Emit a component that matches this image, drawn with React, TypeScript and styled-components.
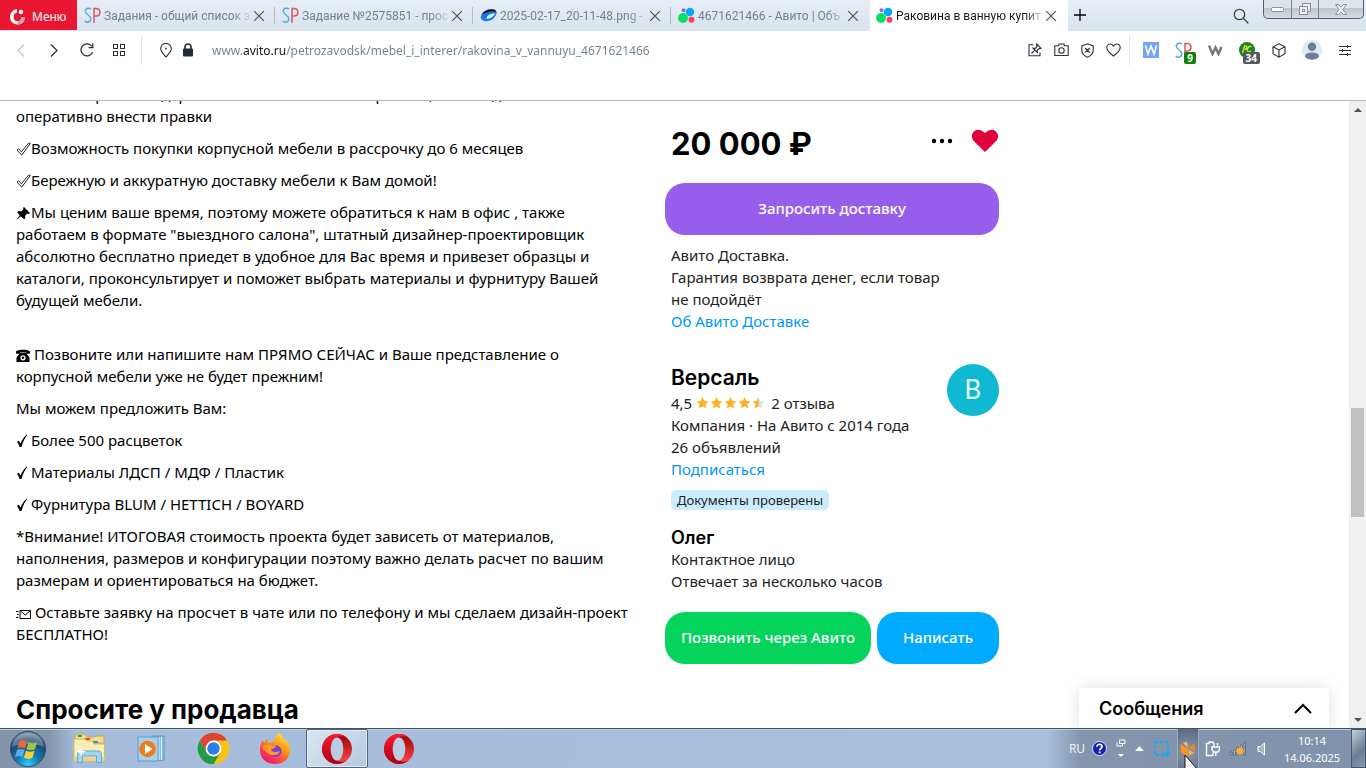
import React from 'react';
import styled, { createGlobalStyle } from 'styled-components';

const UI = '"Noto Sans", "Open Sans", sans-serif';
const BODY = '"Noto Sans", "Open Sans", sans-serif';
const HEADING = 'Inter, "Liberation Sans", sans-serif';

const GlobalStyle = createGlobalStyle`
  *, *::before, *::after { box-sizing: border-box; }
  body { margin: 0; background: #fff; font-family: ${BODY}; color: #000; overflow: hidden; }
  button { border: 0; background: none; padding: 0; font: inherit; color: inherit; cursor: pointer; }
  h1, h2, h3, p { margin: 0; }
  h1, h2, h3 { font-family: ${HEADING}; }
  svg { display: block; flex: none; }
`;

/* ---------- browser frame ---------- */

const Shell = styled.div`
  display: flex;
  flex-direction: column;
  height: 100vh;
`;

const TabStrip = styled.header`
  display: flex;
  flex: none;
  height: 31px;
  background: linear-gradient(#e7eef6, #d9e2ec);
  font-family: ${UI};
  font-size: 12px;
`;

const MenuButton = styled.button`
  display: flex;
  align-items: center;
  gap: 6px;
  width: 77px;
  height: 30px;
  padding: 2px 0 0 9px;
  flex: none;
  color: #fff;
  background: #ea1631;
`;

const Tabs = styled.nav`
  display: flex;
  flex: 0 1 990px;
  min-width: 0;
  margin-left: 1px;
`;

const TabItem = styled.div<{ $active?: boolean }>`
  display: flex;
  align-items: center;
  flex: 1 1 0;
  min-width: 0;
  height: 31px;
  padding: 0 11px 0 6px;
  gap: 3px;
  position: relative;
  color: ${p => (p.$active ? '#16181c' : '#74808f')};
  background: ${p => (p.$active ? '#fff' : 'transparent')};
  &:not(:nth-last-child(-n + 2))::after {
    content: '';
    position: absolute;
    right: 1px;
    top: 7px;
    height: 17px;
    width: 1px;
    background: #b3bdc9;
  }
`;

const TabTitle = styled.span`
  flex: 1;
  min-width: 0;
  overflow: hidden;
  white-space: nowrap;
  font: 12px/18px Roboto, sans-serif;
  mask-image: linear-gradient(90deg, #000 88%, transparent 102%);
`;

const CloseButton = styled.button`
  display: grid;
  place-items: center;
  width: 12px;
  height: 12px;
`;

const NewTab = styled.button`
  display: grid;
  place-items: center;
  width: 24px;
  height: 30px;
`;

const StripEnd = styled.div`
  display: flex;
  margin-left: auto;
  gap: 12px;
  padding-right: 2px;
`;

const WindowButtons = styled.div`
  display: flex;
  height: 19px;
  border: 1px solid #54606b;
  border-top: 0;
  border-radius: 0 0 5px 5px;
  background: linear-gradient(#dfe4ea 0 45%, #bfc5cc 46%, #d7dce1);
  overflow: hidden;
`;

const WindowButton = styled.button<{ $w: number }>`
  display: grid;
  place-items: center;
  width: ${p => p.$w}px;
  & + & { border-left: 1px solid #7b858f; }
`;

const Toolbar = styled.div`
  display: flex;
  flex: none;
  height: 70px;
  padding: 0 5px 31px 4px;
  align-items: center;
  border-bottom: 1px solid #a9bdcc;
  background: #fff;
  color: #2a333c;
`;

const ToolButton = styled.button<{ $w?: number }>`
  position: relative;
  display: grid;
  place-items: center;
  flex: none;
  width: ${p => p.$w ?? 32}px;
  height: 32px;
`;

const Divider = styled.span<{ $m: string }>`
  width: 1px;
  height: 29px;
  flex: none;
  margin: ${p => p.$m};
  background: #dfe3e8;
`;

const Address = styled.input`
  flex: 1;
  min-width: 0;
  height: 28px;
  padding: 0;
  margin-left: 13px;
  border: 0;
  outline: 0;
  font: 12px ${UI};
  color: transparent;
  background: linear-gradient(90deg, #6f7f8e 31px, #10161c 31px 74px, #6f7f8e 74px);
  background-clip: text;
  -webkit-background-clip: text;
`;

const Count = styled.span<{ $bg: string }>`
  position: absolute;
  right: 3px;
  bottom: 2px;
  padding: 0 3px;
  height: 12px;
  border-radius: 2px;
  background: ${p => p.$bg};
  color: #fff;
  font: bold 10px/12px ${UI};
`;

/* ---------- page ---------- */

const Viewport = styled.main`
  position: relative;
  display: flex;
  flex: 1;
  min-height: 0;
  overflow: hidden;
`;

const Page = styled.div`
  flex: 1;
  min-width: 0;
  overflow: hidden;
  display: grid;
  grid-template-columns: minmax(0, 649px) 334px;
  align-items: start;
  padding-left: 16px;
`;

const Description = styled.section`
  display: flex;
  flex-direction: column;
  gap: 10px;
  margin-top: -18px;
  font-size: 15px;
  line-height: 22px;
  white-space: nowrap;
`;

const Spacer = styled.p`
  height: 12px;
`;

const Glyph = styled.svg`
  display: inline-block;
  vertical-align: -2px;
`;

const AskTitle = styled.h2`
  margin-top: 39px;
  font-size: 26px;
  line-height: 32px;
  font-weight: 700;
`;

const Card = styled.aside`
  display: flex;
  flex-direction: column;
  padding-top: 22px;
  font-size: 15px;
  line-height: 22px;
  color: #222;
`;

const Inset = styled.div`
  padding-left: 6px;
`;

const PriceRow = styled.div`
  display: flex;
  align-items: center;
  gap: 18px;
  height: 42px;
  padding-left: 6px;
  margin-bottom: 18px;
`;

const Price = styled.h1`
  flex: 1;
  font-size: 31px;
  line-height: 42px;
  font-weight: 700;
  color: #000;
`;

const PriceAction = styled.button`
  padding-bottom: 6px;
`;

const ActionButton = styled.button<{ $bg: string }>`
  height: 52px;
  padding-bottom: 2px;
  border-radius: 20px;
  background: ${p => p.$bg};
  color: #fff;
  font-weight: 500;
  font-size: 15px;
  white-space: nowrap;
`;

const Delivery = styled(Inset)`
  padding-top: 9px;
`;

const BlueLink = styled.a`
  display: block;
  color: #0097f2;
  text-decoration: none;
`;

const Seller = styled(Inset)`
  display: flex;
  justify-content: space-between;
  padding-top: 32px;
`;

const SellerName = styled.h2`
  font-size: 21px;
  line-height: 28px;
  font-weight: 600;
  color: #000;
`;

const Rating = styled.p`
  display: flex;
  align-items: center;
  gap: 4px;
`;

const Stars = styled.span`
  display: flex;
  gap: 1px;
  margin-right: 2px;
`;

const Avatar = styled.span`
  display: grid;
  place-items: center;
  flex: none;
  width: 52px;
  height: 52px;
  border-radius: 50%;
  background: #0fb9d1;
  color: #e2f6f9;
  font: 27px Roboto, sans-serif;
`;

const Verified = styled.p`
  width: fit-content;
  margin-top: 10px;
  padding: 0 6px;
  border-radius: 5px;
  background: #cbebff;
  font-size: 13px;
  line-height: 20px;
`;

const Contact = styled(Inset)`
  padding-top: 18px;
`;

const ContactName = styled.h3`
  font-size: 18px;
  line-height: 20px;
  font-weight: 600;
  color: #000;
`;

const Actions = styled.div`
  display: flex;
  gap: 6px;
  padding-top: 20px;
  & > :first-child { flex: 206 0 0; }
  & > :last-child { flex: 122 0 0; }
`;

const Messages = styled.button`
  position: absolute;
  right: 37px;
  bottom: 0;
  display: flex;
  align-items: center;
  justify-content: space-between;
  width: 250px;
  height: 40px;
  padding: 0 17px 0 20px;
  background: #fff;
  border-radius: 4px 4px 0 0;
  box-shadow: 0 0 16px rgba(0, 0, 0, 0.13);
  font-family: ${HEADING};
  font-size: 18px;
  font-weight: 600;
`;

const Scrollbar = styled.div`
  display: flex;
  flex-direction: column;
  align-items: center;
  flex: none;
  width: 17px;
  background: #f0f0f1;
`;

const ScrollArrow = styled.button`
  display: grid;
  place-items: center;
  width: 17px;
  height: 17px;
`;

const Track = styled.span<{ $grow: number }>`
  flex: ${p => p.$grow} 0 0;
`;

const Thumb = styled.span`
  flex: 109 0 0;
  width: 13px;
  background: #c0c0c2;
`;

/* ---------- taskbar ---------- */

const Taskbar = styled.footer`
  position: relative;
  display: flex;
  flex: none;
  align-items: center;
  height: 40px;
  border-top: 1px solid #43525f;
  box-shadow: inset 0 1px 0 #bfd0e4;
  background: linear-gradient(90deg, #8394ab 0, #8394ab 48px, #a5bddb 76px, #a8c0dc calc(100% - 320px), #8495ac calc(100% - 285px), #8193ac);
  font-family: ${UI};
  color: #fff;
`;

const TaskButton = styled.button<{ $w?: number; $active?: boolean }>`
  display: grid;
  place-items: center;
  flex: none;
  width: ${p => p.$w ?? 62}px;
  height: 39px;
  border-radius: 2px;
  ${p => p.$active && 'border: 1px solid #54657a; background: linear-gradient(135deg, #dbe6f3, #b4c9e1); box-shadow: inset 0 0 0 1px #dfeaf6;'}
`;

const Tray = styled.div`
  display: flex;
  align-items: center;
  height: 39px;
  margin-left: auto;
`;

const Language = styled.button`
  width: 20px;
  font-size: 12px;
  color: #eef2f7;
`;

const TrayButton = styled.button<{ $w?: number; $lit?: boolean }>`
  display: grid;
  place-items: center;
  width: ${p => p.$w ?? 24}px;
  height: 39px;
  ${p => p.$lit && 'background: radial-gradient(circle at 50% 60%, #8c9bb0, #58677d); border: solid #9fadbf; border-width: 0 1px;'}
`;

const Clock = styled.time`
  width: 78px;
  font-size: 11px;
  line-height: 17px;
  text-align: center;
`;

const ShowDesktop = styled.button`
  width: 15px;
  height: 39px;
  border: 1px solid #44566b;
  background: linear-gradient(135deg, #c3cedb, #6b7e95 60%, #8b9bb0);
`;

const Pointer = styled.svg`
  position: absolute;
  right: 169px;
  top: 26px;
`;

/* ---------- drawings ---------- */

const Cross = () => (
  <svg width="10" height="10" viewBox="0 0 10 10" stroke="#4b5259" strokeWidth="1.2"><path d="M0 0 10 10M10 0 0 10" /></svg>
);

const SPIcon = () => (
  <svg width="17" height="17" viewBox="0 0 17 17" fill="none" strokeWidth="1.5">
    <path d="M7 2.3C5.500 .6 1.500 .8 1.300 4.200c0 3.600 5.500 4 5.500 7.600 0 3.700-4 4-6 2.300" stroke="#55addb" />
    <path d="M10 16V1.500h2c5.200 0 5.200 7.500 0 7.500h-2" stroke="#dc5560" />
  </svg>
);

const AvitoIcon = () => (
  <svg width="17" height="17" viewBox="0 0 17 17">
    <circle cx="5" cy="11" r="4.900" fill="#04e061" /><circle cx="12" cy="5" r="4.200" fill="#00aaff" />
    <circle cx="13.500" cy="12.800" r="3" fill="#ff4053" /><circle cx="5.500" cy="3.200" r="1.900" fill="#965eeb" />
  </svg>
);

const DiskIcon = () => (
  <svg width="17" height="17" viewBox="0 0 17 17">
    <path d="M1.500 8C3 4 8 2 12.500 2.200c2.500.2 4 1.200 4 3.300L14 8 3 12z" fill="#07090f" />
    <path d="M.8 10.500C.6 7.500 5 5.800 9 4.800c3-.7 6-.6 7.400.6.5 3.600-4.400 8.600-9.900 8.800-3.200 0-5.500-1.400-5.700-3.700z" fill="#1679f0" />
    <path d="M6.500 11C7 8.500 10 6.500 15 6.200c-.8 2.600-3.700 5-6.500 5.500-1.200.2-2.100 0-2-.7z" fill="#eaf6ff" />
  </svg>
);

const MenuMark = () => (
  <svg width="17" height="17" viewBox="0 0 17 17">
    <path d="M8 1C3.500 2 1 5 1 9c0 4.500 3.500 7.500 7.500 7.500 4.500 0 7.500-3.500 7.500-7.500h-3.500c0 2.500-1.500 4.200-4 4.200S4.600 11.500 4.600 9C4.600 6 6 5 8 4.600z" fill="#fff" />
    <path d="M8.500 13.200V16.500C13 16.500 16 13 16 9h-3.500c0 2.500-1.500 4.200-4 4.200z" fill="#c9a3a9" />
    <circle cx="12" cy="4" r="2.200" fill="#fff" />
  </svg>
);

const OperaIcon = () => (
  <svg width="32" height="32" viewBox="0 0 32 32">
    <defs>
      <linearGradient id="opA" x1="0" y1="0" x2="0" y2="1"><stop stopColor="#ff1b2d" /><stop offset="1" stopColor="#a70014" /></linearGradient>
      <linearGradient id="opB" x1="0" y1="0" x2="0" y2="1"><stop stopColor="#9c0000" /><stop offset="1" stopColor="#ff4b4b" /></linearGradient>
    </defs>
    <circle cx="16" cy="16" r="15" fill="url(#opB)" />
    <path fill="url(#opA)" d="M16 1a15 15 0 1 0 0 30c3.800 0 7.300-1.500 10-3.800-4.800 2.700-10.500 1.500-13.800-3-3.500-4.800-3.500-11.600 0-16.400 3.300-4.500 9-5.700 13.800-3A15 15 0 0 0 16 1z" />
    <ellipse cx="16" cy="16" rx="6.300" ry="11.500" fill="#b9cde5" />
  </svg>
);

const ChromeIcon = () => (
  <svg width="33" height="33" viewBox="0 0 48 48">
    <circle cx="24" cy="24" r="23" fill="#fbc116" />
    <path d="M4.080 12.500A23 23 0 0 1 43.920 12.500L24 12.500 14.040 29.750z" fill="#dd4435" />
    <path d="M4.080 12.500A23 23 0 0 0 24 47l9.960-17.250A11.500 11.500 0 0 1 14.040 29.750z" fill="#209a4b" />
    <circle cx="24" cy="24" r="11.500" fill="#fff" /><circle cx="24" cy="24" r="9" fill="#2b7de9" />
  </svg>
);

const FirefoxIcon = () => (
  <svg width="32" height="32" viewBox="0 0 32 32">
    <defs>
      <linearGradient id="ff" x1=".85" y1="0" x2=".2" y2="1"><stop stopColor="#fff04a" /><stop offset=".4" stopColor="#ff980e" /><stop offset=".75" stopColor="#ff3750" /><stop offset="1" stopColor="#eb0878" /></linearGradient>
    </defs>
    <path fill="url(#ff)" d="M20 0c3 2 4 4 5 7l1-1c3 3 5 7 5 11 0 8-6 14-15 14S1 25 1 17c0-5 1-7 3-10l1 3 3-4 1 4c2-1 4-1 6-1 0-4 2-7 5-9z" />
    <path fill="#7a3fe0" d="M10 14c3-2 10-3 12 2 2 6-3 8-6 8s-7-2-7-6z" />
    <path fill="#ff9a1f" d="M3 14c3-2 5-3 8-2 2 1 4 0 6 1-1 3-4 2-5 4 2 3 6 2 9 1-1 4-5 5-9 4-4-2-7-4-9-8z" />
  </svg>
);

const WindowsOrb = () => (
  <svg width="38" height="38" viewBox="0 0 38 38">
    <defs>
      <radialGradient id="orb" cx=".5" cy=".95" r=".95"><stop stopColor="#2ad5ff" /><stop offset=".35" stopColor="#137bb5" /><stop offset=".75" stopColor="#1c4168" /><stop offset="1" stopColor="#7d97ae" /></radialGradient>
    </defs>
    <circle cx="19" cy="19" r="17.500" fill="url(#orb)" stroke="#304a63" />
    <path d="M3 17C4 8 11 3 19 3s15 5 16 14c-8-4-24-4-32 0z" fill="#fff" opacity=".28" />
    <path d="M10.500 11.500c3-1.500 5-1.500 7.500 0l-2 7c-2.500-1.500-5-1.500-7.500 0z" fill="#f0653a" />
    <path d="M19.500 12.200c3 1.500 5 1.500 8.500 0l-2 7c-3 1.500-5.500 1.300-8.500 0z" fill="#9cc83f" />
    <path d="M8 20c3-1.500 5-1.500 7.500 0l-2 7c-2.500-1.500-4.500-1.500-7.500 0z" fill="#5ea9e6" />
    <path d="M17 20.700c3 1.500 5 1.500 8.500 0l-2 7c-3 1.500-5.500 1.300-8.500 0z" fill="#fccd3b" />
  </svg>
);

const ExplorerIcon = () => (
  <svg width="33" height="31" viewBox="0 0 33 31">
    <path d="M2 4 4 1h8l2 3h7l2-1h8v7H2z" fill="#f3dd8e" stroke="#c9a94e" />
    <path d="M5 2h4v2H5z" fill="#22b14c" /><path d="M12 5h5v2h-5z" fill="#d94a2b" /><path d="M20 8h5v2h-5z" fill="#3a8ee0" />
    <path d="M1 6h11l2 2h5l2 3h10.500v17H1z" fill="#fbeeb5" stroke="#d6b962" />
    <path d="M1.500 24h30v4h-30z" fill="#ecd386" />
    <path d="M4.500 29.500V22c0-3 1.500-4 4-4h16c3 0 4 1 4 4v7.500h-5V23h-14v6.500z" fill="#9fd5ee" stroke="#5aa9cf" />
    <path d="m8 12 1 5 4 1.500-4 1.500-1 4-1-4-4-1.500L7 17z" fill="#fff" />
  </svg>
);

const PlayerIcon = () => (
  <svg width="30" height="28" viewBox="0 0 30 28">
    <path d="M15 1h12v24l-12 1z" fill="#8fc1e4" stroke="#5a9ac6" /><path d="M22 2v23M24.500 2v23" stroke="#d9ecf8" />
    <rect x="1" y="2" width="20" height="24" fill="#a9d0ea" stroke="#5e9dca" />
    <circle cx="10.500" cy="14" r="8.300" fill="#f07a1c" /><path d="M8 9v10l7.500-5z" fill="#fff" />
  </svg>
);

const WhiteCheck = () => (
  <Glyph width="15" height="14" viewBox="0 0 15 14" fill="#fff" stroke="#222" strokeWidth="1">
    <path d="M1 8.300 2.600 6.800l2.700 3L12.800 1l1.500.6L5.800 13z" />
  </Glyph>
);

const Check = () => (
  <Glyph width="15" height="14" viewBox="0 0 15 14"><path d="M1 8 3 6.800l1.500 3C6 6 7.500 3.500 10.500.8l.6.400C8.500 4.500 6.800 8 5.500 13H3.700C3 11 2.200 9.500 1 8z" /></Glyph>
);

const PinGlyph = () => (
  <Glyph width="15" height="14" viewBox="0 0 15 14"><path d="M8 1 14 7l-1.300 1-1.400-.5-2.200 2.200.2 2.600L8 13.300 4.900 10.200 1 13.500l-.3-.3 3.200-4L1.200 6.500 2.500 5l2.600.4 2.400-2.300L7 2z" /></Glyph>
);

const PhoneGlyph = () => (
  <Glyph width="14" height="13" viewBox="0 0 14 13">
    <path d="M0 4.500V2.500C1 0 13 0 14 2.500v2l-3.500.6L10 3.500H4l-.5 1.600z" />
    <path fillRule="evenodd" d="M4 4h6l3.500 4.500V13H.5V8.500zm3 2.200a2.600 2.600 0 1 0 0 5.200 2.600 2.600 0 0 0 0-5.200z" /><circle cx="7" cy="8.800" r="1.300" />
  </Glyph>
);

const MailGlyph = () => (
  <Glyph width="15" height="11" viewBox="0 0 15 11" fill="none" stroke="#000"><path d="M4 1.500h10.500v8H4zM4.500 2 9.200 6 14 2M0 2.500h2.500M1 5.500h1.500M0 8.500h2.500" /></Glyph>
);

const STAR = 'M6 0l1.800 4 4.200.400-3.200 2.900 1 4.200L6 9.300 2.200 11.500l1-4.200L0 4.400 4.200 4z';

const Star = ({ half }: { half?: boolean }) => (
  <svg width="13" height="12" viewBox="0 0 12 12">
    <path d={STAR} fill={half ? '#e1e1e1' : '#ffb021'} />
    {half && <path d="M6 0v9.300L2.200 11.500l1-4.200L0 4.400 4.200 4z" fill="#ffb021" />}
  </svg>
);

const line = { fill: 'none', stroke: 'currentColor', strokeWidth: 1.3 } as const;

/* ---------- screen ---------- */

const tabs = [
  { icon: <SPIcon />, title: 'Задания - общий список з' },
  { icon: <SPIcon />, title: 'Задание №2575851 - прос' },
  { icon: <DiskIcon />, title: '2025-02-17_20-11-48.png -' },
  { icon: <AvitoIcon />, title: '4671621466 - Авито | Объ' },
  { icon: <AvitoIcon />, title: 'Раковина в ванную купить', active: true },
];

export default function App() {
  return (
    <Shell>
      <GlobalStyle />
      <TabStrip>
        <MenuButton><MenuMark />Меню</MenuButton>
        <Tabs aria-label="Вкладки">
          {tabs.map(t => (
            <TabItem key={t.title} $active={t.active}>
              {t.icon}
              <TabTitle>{t.title}</TabTitle>
              <CloseButton aria-label="Закрыть вкладку"><Cross /></CloseButton>
            </TabItem>
          ))}
        </Tabs>
        <NewTab aria-label="Новая вкладка">
          <svg width="12" height="12" viewBox="0 0 12 12" {...line}><path d="M6 0v12M0 6h12" /></svg>
        </NewTab>
        <StripEnd>
          <ToolButton aria-label="Поиск" $w={20}>
            <svg width="16" height="16" viewBox="0 0 16 16" {...line} stroke="#39434d"><circle cx="6.500" cy="6.500" r="5.200" /><path d="m10.300 10.300 5 5" /></svg>
          </ToolButton>
          <WindowButtons>
            <WindowButton $w={27} aria-label="Свернуть"><svg width="13" height="5"><rect x=".5" y=".5" width="12" height="4" rx="1" fill="#fff" stroke="#8b9299" /></svg></WindowButton>
            <WindowButton $w={27} aria-label="Восстановить">
              <svg width="12" height="12" fill="#eef0f2" stroke="#868d94"><rect x="3.500" y=".5" width="8" height="8" /><rect x=".5" y="3.500" width="8" height="8" /><rect x="3.500" y="6.500" width="2" height="2" /></svg>
            </WindowButton>
            <WindowButton $w={45} aria-label="Закрыть">
              <svg width="12" height="11" viewBox="0 0 12 11"><path d="M.5.500h3L6 3.200 8.500.500h3L8 5.500l3.500 5h-3L6 7.800l-2.500 2.700h-3L4 5.500z" fill="#f6f7f8" stroke="#8b9299" /></svg>
            </WindowButton>
          </WindowButtons>
        </StripEnd>
      </TabStrip>

      <Toolbar>
        <ToolButton $w={33} aria-label="Назад"><svg width="8" height="13" viewBox="0 0 8 13" {...line} stroke="#c2c6ca"><path d="M7 .5 1 6.500l6 6" /></svg></ToolButton>
        <ToolButton $w={33} aria-label="Вперёд"><svg width="8" height="13" viewBox="0 0 8 13" {...line}><path d="m1 .5 6 6-6 6" /></svg></ToolButton>
        <ToolButton $w={33} aria-label="Обновить"><svg width="14" height="14" viewBox="0 0 14 14" {...line}><path d="M12.500 9.300A6 6 0 1 1 12 3.500M12.800.5v4.200H8.600" /></svg></ToolButton>
        <ToolButton $w={33} aria-label="Экспресс-панель">
          <svg width="13" height="13" viewBox="0 0 13 13" {...line} strokeWidth="1"><rect x=".5" y=".5" width="4" height="4" /><rect x="7.500" y=".5" width="4" height="4" /><rect x=".5" y="7.500" width="4" height="4" /><rect x="7.500" y="7.500" width="4" height="4" /></svg>
        </ToolButton>
        <Divider $m="0 13px 0 5px" />
        <ToolButton $w={22} aria-label="Местоположение"><svg width="12" height="15" viewBox="0 0 12 15" {...line} strokeWidth="1.1"><path d="M6 14C3 10.500.7 8.500.7 5.700a5.300 5.300 0 0 1 10.600 0C11.300 8.500 9 10.500 6 14z" /><circle cx="6" cy="5.500" r=".4" fill="currentColor" /></svg></ToolButton>
        <ToolButton $w={22} aria-label="Сведения о сайте"><svg width="12" height="14" viewBox="0 0 12 14"><rect x="1" y="5.500" width="10" height="8" rx="1.200" fill="#222c35" /><path d="M3 6V4a3 3 0 0 1 6 0v2" fill="none" stroke="#222c35" strokeWidth="1.600" /></svg></ToolButton>
        <Address aria-label="Адрес" defaultValue="www.avito.ru/petrozavodsk/mebel_i_interer/rakovina_v_vannuyu_4671621466" />
        <ToolButton $w={26} aria-label="Изменить">
          <svg width="14" height="14" viewBox="0 0 14 14" {...line} strokeWidth="1.100"><path d="M5.500 1.700H1v11h11V9.500M8.800 1l4.200 4.200-1 .4-.8-.2-2 2 .2 2.200L5 5.200l2.200.2 2-2-.8-1.400zM6.800 7.200 3.500 10.500" /></svg>
        </ToolButton>
        <ToolButton $w={26} aria-label="Снимок"><svg width="15" height="14" viewBox="0 0 15 14" {...line} strokeWidth="1.100"><path d="M4.500 2.800 5 1h5l.5 1.800h3.700v9.700H.8V2.800z" /><circle cx="7.500" cy="7.500" r="2.700" /></svg></ToolButton>
        <ToolButton $w={26} aria-label="Блокировка рекламы"><svg width="13" height="15" viewBox="0 0 13 15" {...line} strokeWidth="1.100"><path d="M6.500.8 12.200 3v4.500c0 3-2 5-5.700 6.700C2.800 12.500.8 10.500.8 7.500V3zM4.200 5l4.600 4.600M8.800 5 4.200 9.600" /></svg></ToolButton>
        <ToolButton $w={26} aria-label="В закладки"><svg width="15" height="14" viewBox="0 0 15 14" {...line} strokeWidth="1.100"><path d="M7.500 13C3 9.500.8 7.500.8 4.700.8 2.500 2.300 1 4.200 1c1.500 0 2.600.9 3.300 2.200C8.200 1.900 9.300 1 10.800 1c1.900 0 3.400 1.500 3.400 3.700 0 2.800-2.200 4.800-6.700 8.300z" /></svg></ToolButton>
        <Divider $m="0 5px 0 3px" />
        <ToolButton aria-label="Расширение W"><svg width="16" height="16" viewBox="0 0 16 16"><path d="M0 0h16v16H0z" fill="#74a5fa" /><path d="m2.500 3.500 2.500 8.500 3-8 3 8 2.500-8.500" fill="none" stroke="#fff" strokeWidth="1.600" /></svg></ToolButton>
        <ToolButton aria-label="Расширение SP"><SPIcon /><Count $bg="#0a8208">9</Count></ToolButton>
        <ToolButton aria-label="Расширение"><svg width="15" height="11" viewBox="0 0 15 11" fill="none" stroke="#777" strokeWidth="2.400"><path d="M1 .5 4.500 9l3-6.500L10.500 9l3-7" /></svg></ToolButton>
        <ToolButton aria-label="Расширение PC"><svg width="16" height="16" viewBox="0 0 16 16"><circle cx="8" cy="8" r="8" fill="#13862c" /><path d="m3.500 11 2-7c3-1 3 3 .2 3.500M12.500 5c-2-2-4.500 1-4 3.500.5 2 2.500 1.500 3.500.5" fill="none" stroke="#e6dc2a" strokeWidth="1.400" /></svg><Count $bg="#555a5e">34</Count></ToolButton>
        <ToolButton aria-label="Расширения"><svg width="14" height="15" viewBox="0 0 14 15" {...line} strokeWidth="1.100"><path d="m7 .8 6 3v7l-6 3.400-6-3.400v-7zM1 3.800l6 3.200 6-3.200M7 7v7" /></svg></ToolButton>
        <ToolButton $w={34} aria-label="Профиль"><svg width="20" height="20" viewBox="0 0 20 20"><circle cx="10" cy="10" r="10" fill="#e2eaf1" /><circle cx="10" cy="6.800" r="4.200" fill="#6d7f92" /><path d="M3 16.500c0-5.500 14-5.500 14 0-3.500 4.300-10.500 4.300-14 0z" fill="#6d7f92" /></svg></ToolButton>
        <ToolButton aria-label="Настройки"><svg width="12" height="11" viewBox="0 0 12 11" {...line} strokeWidth="1"><path d="M0 1.500h12M0 5.500h12M0 9.500h12M8.500 0v3M3.500 4v3M8.500 8v3" /></svg></ToolButton>
      </Toolbar>

      <Viewport>
        <Page>
          <Description>
            <p>✓ Личный расчет и держим связь на всех этапах работы, если надо<br />оперативно внести правки</p>
            <p><WhiteCheck />Возможность покупки корпусной мебели в рассрочку до 6 месяцев</p>
            <p><WhiteCheck />Бережную и аккуратную доставку мебели к Вам домой!</p>
            <p><PinGlyph />Мы ценим ваше время, поэтому можете обратиться к нам в офис , также<br />работаем в формате "выездного салона", штатный дизайнер-проектировщик<br />абсолютно бесплатно приедет в удобное для Вас время и привезет образцы и<br />каталоги, проконсультирует и поможет выбрать материалы и фурнитуру Вашей<br />будущей мебели.</p>
            <Spacer />
            <p><PhoneGlyph /> Позвоните или напишите нам ПРЯМО СЕЙЧАС и Ваше представление о<br />корпусной мебели уже не будет прежним!</p>
            <p>Мы можем предложить Вам:</p>
            <p><Check />Более 500 расцветок</p>
            <p><Check />Материалы ЛДСП / МДФ / Пластик</p>
            <p><Check />Фурнитура BLUM / HETTICH / BOYARD</p>
            <p>*Внимание! ИТОГОВАЯ стоимость проекта будет зависеть от материалов,<br />наполнения, размеров и конфигурации поэтому важно делать расчет по вашим<br />размерам и ориентироваться на бюджет.</p>
            <p><MailGlyph /> Оставьте заявку на просчет в чате или по телефону и мы сделаем дизайн-проект<br />БЕСПЛАТНО!</p>
            <AskTitle>Спросите у продавца</AskTitle>
          </Description>

          <Card>
            <PriceRow>
              <Price>20 000 ₽</Price>
              <PriceAction aria-label="Ещё"><svg width="22" height="6" viewBox="0 0 22 6"><circle cx="3" cy="3" r="2.200" /><circle cx="11" cy="3" r="2.200" /><circle cx="19" cy="3" r="2.200" /></svg></PriceAction>
              <PriceAction aria-label="Убрать из избранного"><svg width="28" height="24" viewBox="0 0 28 24"><path d="M14 23 3 12.300C-2.500 6 4-2.500 11 1.800c1.300.8 2.200 1.600 3 2.500.8-.9 1.700-1.700 3-2.500 7-4.300 13.500 4.200 8 10.500z" fill="#e0003c" /></svg></PriceAction>
            </PriceRow>
            <ActionButton $bg="#965eeb">Запросить доставку</ActionButton>
            <Delivery>
              <p>Авито Доставка.<br />Гарантия возврата денег, если товар<br />не подойдёт</p>
              <BlueLink href="#delivery">Об Авито Доставке</BlueLink>
            </Delivery>
            <Seller>
              <div>
                <SellerName>Версаль</SellerName>
                <Rating>4,5 <Stars><Star /><Star /><Star /><Star /><Star half /></Stars> 2 отзыва</Rating>
                <p>Компания · На Авито с 2014 года</p>
                <p>26 объявлений</p>
                <BlueLink href="#subscribe">Подписаться</BlueLink>
                <Verified>Документы проверены</Verified>
              </div>
              <Avatar>В</Avatar>
            </Seller>
            <Contact>
              <ContactName>Олег</ContactName>
              <p>Контактное лицо</p>
              <p>Отвечает за несколько часов</p>
            </Contact>
            <Actions>
              <ActionButton $bg="#04d45c">Позвонить через Авито</ActionButton>
              <ActionButton $bg="#00aaff">Написать</ActionButton>
            </Actions>
          </Card>
        </Page>
        <Messages>Сообщения<svg width="18" height="11" viewBox="0 0 18 11" fill="none" stroke="#000" strokeWidth="2"><path d="m1 10 8-8 8 8" /></svg></Messages>
        <Scrollbar>
          <ScrollArrow aria-label="Вверх"><svg width="8" height="4"><path d="M0 4 4 0l4 4z" fill="#50545a" /></svg></ScrollArrow>
          <Track $grow={290} /><Thumb /><Track $grow={194} />
          <ScrollArrow aria-label="Вниз"><svg width="8" height="4"><path d="M0 0h8L4 4z" fill="#50545a" /></svg></ScrollArrow>
        </Scrollbar>
      </Viewport>

      <Taskbar>
        <TaskButton $w={56} aria-label="Пуск"><WindowsOrb /></TaskButton>
        <TaskButton $w={66} aria-label="Проводник"><ExplorerIcon /></TaskButton>
        <TaskButton $w={60} aria-label="Проигрыватель"><PlayerIcon /></TaskButton>
        <TaskButton aria-label="Chrome"><ChromeIcon /></TaskButton>
        <TaskButton aria-label="Firefox"><FirefoxIcon /></TaskButton>
        <TaskButton $active aria-label="Opera"><OperaIcon /></TaskButton>
        <TaskButton aria-label="Opera, второе окно"><OperaIcon /></TaskButton>
        <Tray>
          <Language>RU</Language>
          <TrayButton aria-label="Справка"><svg width="15" height="15" viewBox="0 0 15 15"><circle cx="7.500" cy="7.500" r="7" fill="#1522b0" stroke="#dfe6f2" /><path d="M5 5.800c0-3.500 5.200-3.200 5 0-.1 1.700-2.400 1.700-2.400 3.400M7.600 10.600v1.600" fill="none" stroke="#fff" strokeWidth="1.800" /></svg></TrayButton>
          <TrayButton $w={20} aria-label="Языковая панель"><svg width="10" height="20" viewBox="0 0 10 20"><path d="M3.500 1v3.500h5.500V1zM1 3.500V7h5.500V4.500" fill="none" stroke="#fff" /><path d="M2 15h6l-3 3z" fill="#fff" /></svg></TrayButton>
          <TrayButton $w={16} aria-label="Скрытые значки"><svg width="9" height="5"><path d="M0 5 4.500 0 9 5z" fill="#f2f5f9" /></svg></TrayButton>
          <TrayButton $w={30} aria-label="Снимок экрана"><svg width="16" height="16" viewBox="0 0 16 16" fill="none" stroke="#12aef3" strokeWidth="2"><rect x="1" y="1" width="13" height="13" strokeDasharray="3 2" /><path d="M10 13.500h6M13.500 11v5" /></svg></TrayButton>
          <TrayButton $w={22} $lit aria-label="Антивирус"><svg width="16" height="16" viewBox="0 0 16 16"><path d="m.5 3 7 4.500V15L1 11.500z" fill="#ff9417" /><path d="m3 2 4-1.500L8 6.500z" fill="#ffb866" /><path d="m9 7 5.500-5 .5 8.500z" fill="#f9870f" /><path d="m8.500 8.500 5.500 3.500-5.500 3z" fill="#ffab4a" /></svg></TrayButton>
          <TrayButton $w={26} aria-label="Питание"><svg width="15" height="16" viewBox="0 0 15 16" fill="none" stroke="#fff" strokeWidth="1.400"><path d="M8 2.500V1H4v1.500H1.500v12H8v-3M9 2v4M12.500 2v4M7 6h7.500v3L13 11H9L7 9zM10.800 11v4" /></svg></TrayButton>
          <TrayButton aria-label="Сеть"><svg width="17" height="15" viewBox="0 0 17 15"><path d="M1 14v-3h2v3zM4.500 14V9h2v5zM8 14V6.500h2V14zM11.500 14V4h2v10zM15 14V1h1.500v13z" fill="#b7c1cd" stroke="#4d5b6c" strokeWidth=".7" /><circle cx="11" cy="10" r="3.300" fill="#ffa41b" /><path d="M11 5.500v9M6.500 10h9M8 7l6 6M14 7l-6 6" stroke="#ffb43b" /></svg></TrayButton>
          <TrayButton aria-label="Громкость"><svg width="9" height="14" viewBox="0 0 9 14"><path d="M1 4.500h2.500L7.500 1v12L3.500 9.500H1z" fill="#a9b5c4" stroke="#fff" /></svg></TrayButton>
          <Clock>10:14<br />14.06.2025</Clock>
          <ShowDesktop aria-label="Показать рабочий стол" />
        </Tray>
        <Pointer width="13" height="14" viewBox="0 0 13 14"><path d="M1 0v19l4-4 3 6 3-1-3-6h5z" fill="#fff" stroke="#111" /></Pointer>
      </Taskbar>
    </Shell>
  );
}
